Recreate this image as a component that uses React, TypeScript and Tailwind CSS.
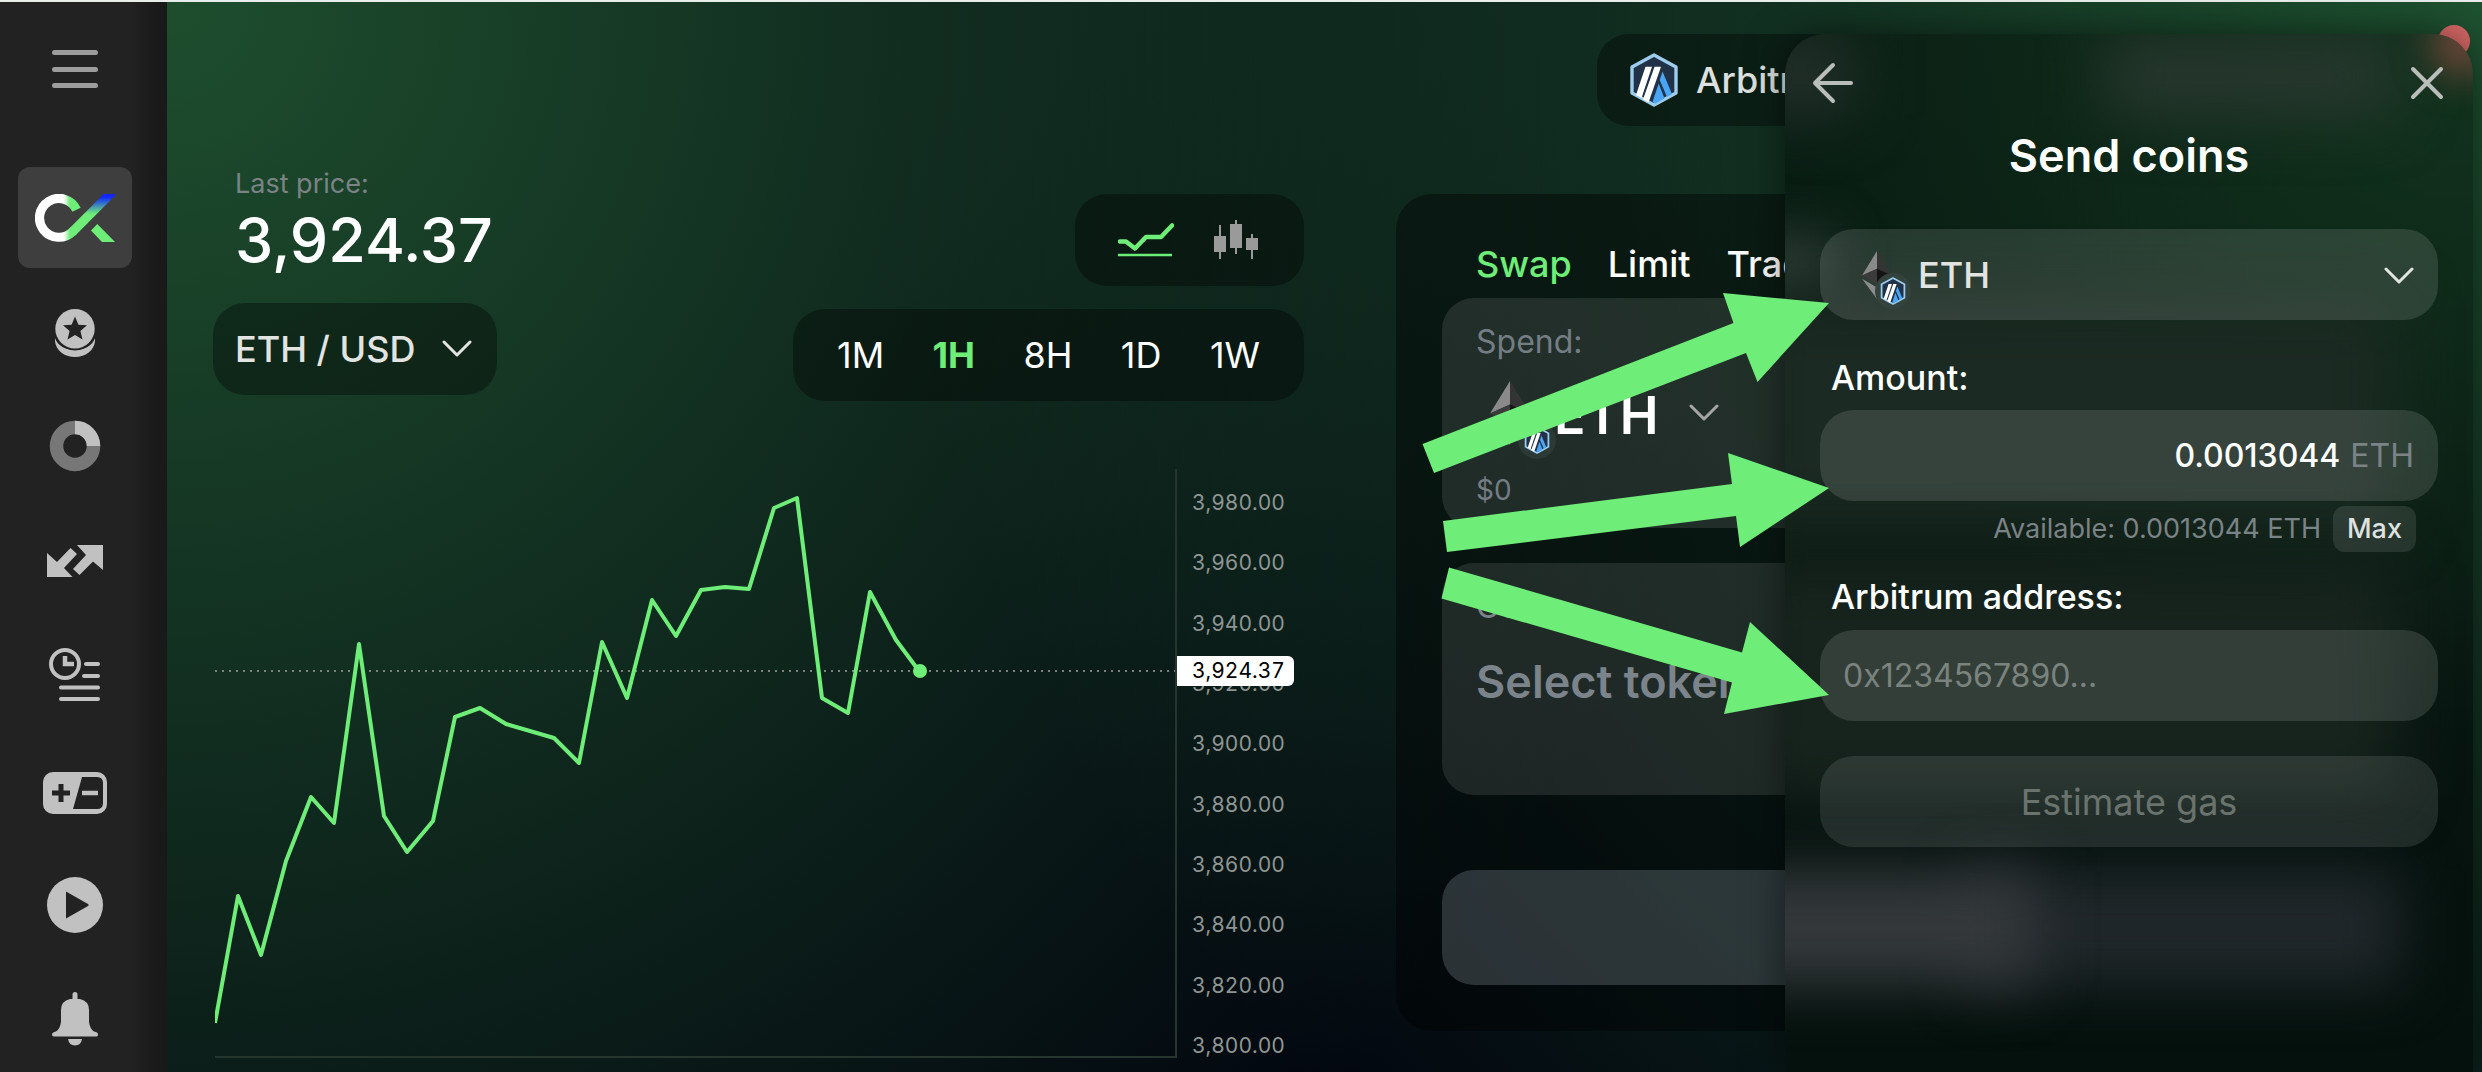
import React from "react";

const axisPrices = [
  "3,980.00",
  "3,960.00",
  "3,940.00",
  "3,920.00",
  "3,900.00",
  "3,880.00",
  "3,860.00",
  "3,840.00",
  "3,820.00",
  "3,800.00",
];

const intervals = ["1M", "1H", "8H", "1D", "1W"];

const linePoints =
  "0,554 23,427 46,486 71,392 96,328 119,354 144,175 169,347 192,383 218,352 240,248 265,239 291,255 339,269 364,294 387,173 412,229 437,131 461,167 486,121 510,118 534,120 559,39 582,29 607,229 633,244 655,123 681,171 704,202";

function Chevron({ className = "" }: { className?: string }) {
  return (
    <svg viewBox="0 0 30 18" className={`h-[18px] w-[30px] ${className}`} fill="none" stroke="currentColor" strokeWidth="3" strokeLinecap="round" strokeLinejoin="round" aria-hidden="true">
      <path d="M2 2l13 13L28 2" />
    </svg>
  );
}

function ArbitrumMark({ className }: { className: string }) {
  return (
    <svg viewBox="0 0 48 54" className={className} aria-hidden="true">
      <path d="M24 2L46 14V40L24 52L2 40V14Z" fill="#213147" stroke="#9dcced" strokeWidth="3.4" strokeLinejoin="round" />
      <path d="M15.5 13.7H22L11.5 45L6 42Z" fill="#fff" />
      <path d="M24.5 13.7H31L18.5 49.5L13 46.5Z" fill="#fff" />
      <path d="M32.5 18.5L42 41L37 44L29.7 27Z" fill="#4aa5f5" />
      <path d="M28.7 30.5L34.5 45.5L25.5 50.5L22.5 49Z" fill="#4aa5f5" />
    </svg>
  );
}

function EthDiamond({ className }: { className: string }) {
  return (
    <svg viewBox="0 0 40 64" className={className} aria-hidden="true">
      <path d="M20 0L0 32.5L20 23.5Z" fill="#8a8a8a" />
      <path d="M20 0L40 32.5L20 23.5Z" fill="#343434" />
      <path d="M20 23.5L0 32.5L20 44Z" fill="#3c3b3b" />
      <path d="M20 23.5L40 32.5L20 44Z" fill="#141414" />
      <path d="M0 37L20 48.5V64Z" fill="#8c8c8c" />
      <path d="M40 37L20 48.5V64Z" fill="#393939" />
    </svg>
  );
}

function Logo() {
  return (
    <svg viewBox="0 0 80 48" className="h-12 w-20" fill="none" aria-hidden="true">
      <defs>
        <linearGradient id="ring" gradientUnits="userSpaceOnUse" x1="29" y1="0" x2="35" y2="0">
          <stop offset="0" stopColor="#fff" />
          <stop offset="1" stopColor="#6eed78" />
        </linearGradient>
        <linearGradient id="slash" gradientUnits="userSpaceOnUse" x1="0" y1="3" x2="0" y2="20">
          <stop offset="0" stopColor="#1026fa" />
          <stop offset="1" stopColor="#6eed78" />
        </linearGradient>
      </defs>
      <path d="M41.5 15.7A19.4 19.4 0 1 0 37.5 37.7L39 36.2" stroke="url(#ring)" strokeWidth="9.2" />
      <path d="M37.3 37.9L81 -5.8" stroke="url(#slash)" strokeWidth="9.2" />
      <path d="M62.3 30L80 48H67L56 36.5Z" fill="#6eed78" />
    </svg>
  );
}

function CoinsIcon() {
  return (
    <svg viewBox="0 0 40 48" className="h-12 w-10" aria-hidden="true">
      <path d="M0 29C5 45 35 45 40 29C41 40 32 48 20 48S-1 40 0 29Z" fill="#c1c1c1" />
      <circle cx="20" cy="20" r="21.5" fill="#222" />
      <circle cx="20" cy="19.7" r="19.7" fill="#c1c1c1" />
      <path d="M20 7.5L23.4 15.7L32 16.3L25.4 22L27.5 30.5L20 25.9L12.5 30.5L14.6 22L8 16.3L16.6 15.7Z" fill="#222" />
    </svg>
  );
}

function DonutIcon() {
  return (
    <svg viewBox="0 0 52 52" className="h-[52px] w-[52px]" fill="none" strokeWidth="13.5" aria-hidden="true">
      <circle cx="26" cy="26" r="18.5" stroke="#777" />
      <path d="M26 7.5A18.5 18.5 0 0 1 44.5 26" stroke="#c1c1c1" />
    </svg>
  );
}

function TransferIcon() {
  return (
    <svg viewBox="0 0 56 32" className="h-8 w-14" fill="#c1c1c1" aria-hidden="true">
      <path d="M0 8L10 17L23.5 3L30 9L17 23L25.5 32H0Z" />
      <path d="M30 0H56V25L46 16.5L32.5 30L26 24L39 10Z" />
    </svg>
  );
}

function HistoryIcon() {
  return (
    <svg viewBox="0 0 52 54" className="h-[54px] w-[52px]" fill="none" stroke="#c1c1c1" strokeWidth="4" strokeLinecap="round" aria-hidden="true">
      <circle cx="16" cy="16" r="14" />
      <path d="M16 8V16H25" strokeLinecap="butt" strokeWidth="4.5" />
      <path d="M37 16H49M35 28H49M12 39.5H49M12 51H49" />
    </svg>
  );
}

function MarginIcon() {
  return (
    <svg viewBox="0 0 64 42" className="h-[42px] w-16" aria-hidden="true">
      <rect width="64" height="42" rx="10" fill="#c1c1c1" />
      <path d="M39 5H54Q60 5 60 11V31Q60 37 54 37H30Z" fill="#222" />
      <path d="M18 12V30M9 21H27" stroke="#222" strokeWidth="5" />
      <path d="M39 21H55" stroke="#c1c1c1" strokeWidth="4.5" />
    </svg>
  );
}

function PlayIcon() {
  return (
    <svg viewBox="0 0 56 56" className="h-14 w-14" aria-hidden="true">
      <circle cx="28" cy="28" r="28" fill="#c1c1c1" />
      <path d="M19 14.5L41 27Q42.5 28 41 29L19 41.5Z" fill="#222" />
    </svg>
  );
}

function BellIcon() {
  return (
    <svg viewBox="0 0 46 54" className="h-[54px] w-[46px]" fill="#c1c1c1" aria-hidden="true">
      <path d="M20.5 2.5Q20.5 0 23 0T25.5 2.5V7H28Q37 9 37 18V30Q38 37 42 39.5Q46 40 46 42.5T44 44.5H2Q0 44.5 0 42.5T4 39.5Q8 37 9 30V18Q9 9 18 7H20.5Z" />
      <path d="M16 47H30Q29 53.5 23 53.5T16 47Z" />
    </svg>
  );
}

function Sidebar() {
  const items = [
    { label: "Coins", icon: <CoinsIcon />, cls: "mt-[41px] h-12" },
    { label: "Portfolio", icon: <DonutIcon />, cls: "mt-[63px] h-[52px]" },
    { label: "Transfers", icon: <TransferIcon />, cls: "mt-[73px] h-8" },
    { label: "History", icon: <HistoryIcon />, cls: "mt-[71px] h-[54px]" },
    { label: "Margin", icon: <MarginIcon />, cls: "mt-[70px] h-[42px]" },
    { label: "Play", icon: <PlayIcon />, cls: "mt-[63px] h-14" },
    { label: "Notifications", icon: <BellIcon />, cls: "mt-[59px] h-[54px]" },
  ];
  return (
    <nav className="flex w-[167px] shrink-0 flex-col items-center bg-[linear-gradient(90deg,#222_0,#222_78%,#1b1b1b_90%,#191919_100%)] pr-[17px]">
      <button aria-label="Menu" className="mt-12 flex h-[38px] w-[46px] flex-col justify-between">
        <span className="h-[5px] w-full rounded-sm bg-[#9c9c9c]" />
        <span className="h-[5px] w-full rounded-sm bg-[#9c9c9c]" />
        <span className="h-[5px] w-full rounded-sm bg-[#9c9c9c]" />
      </button>
      <a href="#trade" aria-label="Trade" className="mt-[79px] flex h-[101px] w-[114px] items-center justify-center rounded-xl bg-[#3e3e3e]">
        <Logo />
      </a>
      {items.map((it) => (
        <a key={it.label} href="#" aria-label={it.label} className={`flex items-center ${it.cls}`}>
          {it.icon}
        </a>
      ))}
    </nav>
  );
}

function PriceChart() {
  return (
    <div className="mt-[68px] flex min-h-[400px] flex-1 pl-[2px]">
      <div className="mb-[14px] min-w-0 flex-1 border-r-2 border-b-2 border-[#26362f]">
        <svg viewBox="0 0 960 587" preserveAspectRatio="none" className="block h-full w-full overflow-hidden" fill="none" role="img" aria-label="ETH / USD price chart">
          <path d="M0 202H960" stroke="#79827d" strokeWidth="2" strokeDasharray="2 5" />
          <polyline points={linePoints} stroke="#6eed78" strokeWidth="4" strokeLinejoin="round" />
          <circle cx="705" cy="202" r="7" fill="#6eed78" />
        </svg>
      </div>
      <div className="relative mb-3 flex w-[127px] flex-col justify-between pt-5 text-[21px] leading-7 tabular-nums text-[#8f9592]">
        {axisPrices.map((p) => (
          <span key={p} className="pl-[15px]">{p}</span>
        ))}
        <span className="absolute top-[187px] left-0 h-[30px] w-[117px] rounded-r-md bg-white pl-[15px] leading-[30px] text-black">3,924.37</span>
      </div>
    </div>
  );
}

function ChartColumn() {
  return (
    <section className="mr-[92px] flex min-w-0 flex-1 flex-col pt-[166px] pl-[46px]">
      <div className="flex items-start justify-between">
        <div>
          <p className="pl-[22px] text-[27px] leading-8 text-[#7b8385]">Last price:</p>
          <p className="mt-1 pl-[22px] text-[61px] leading-[72px] font-medium text-white">3,924.37</p>
          <div className="relative mt-[27px] w-[284px] text-[#e2e4e2]">
            <select aria-label="Trading pair" className="h-[92px] w-full appearance-none rounded-[32px] bg-black/35 pl-[22px] text-[36px] font-medium outline-none">
              <option>ETH / USD</option>
            </select>
            <Chevron className="pointer-events-none absolute top-[37px] right-[25px]" />
          </div>
        </div>
        <div className="mt-[26px] flex flex-col items-end gap-[23px]">
          <div className="flex h-[92px] w-[229px] items-center justify-between rounded-[32px] bg-black/35 pr-[46px] pl-[43px]">
            <button aria-label="Line chart">
              <svg viewBox="0 0 56 34" className="h-[34px] w-14" fill="none" stroke="#6eed78" aria-hidden="true">
                <path d="M2 18.5H8L17 25.5L28 14H43L54 2.5" strokeWidth="4.5" strokeLinecap="round" strokeLinejoin="round" />
                <path d="M0 32H54" strokeWidth="2.5" />
              </svg>
            </button>
            <button aria-label="Candle chart">
              <svg viewBox="0 0 44 40" className="h-10 w-11" fill="#9a9a9a" aria-hidden="true">
                <path d="M0 16H12V32H0ZM5 5H7V39H5ZM16 4H28V28H16ZM21 0H23V34H21ZM32 18H44V30H32ZM37 14H39V39H37Z" />
              </svg>
            </button>
          </div>
          <div className="flex h-[92px] w-[511px] items-center justify-between rounded-[32px] bg-black/35 px-[44px] text-[36px]">
            {intervals.map((i) => (
              <button key={i} className={i === "1H" ? "font-bold text-[#6eed78]" : "text-white"}>{i}</button>
            ))}
          </div>
        </div>
      </div>
      <PriceChart />
    </section>
  );
}

function TradeColumn() {
  return (
    <section className="relative w-[1086px] shrink-0 pt-8 pr-[45px]">
      <div className="flex pl-[201px]">
        <button className="flex h-[92px] w-[360px] items-center rounded-[32px] bg-black/35 pl-[33px] text-[36px] font-medium text-[#dde0de]">
          <ArbitrumMark className="mr-[18px] h-[54px] w-12" />
          Arbitrum
        </button>
      </div>
      <span className="absolute top-[23px] right-3 h-8 w-8 rounded-full bg-[#d96a68]" />
      <div className="mt-[68px] rounded-[36px] bg-black/40 px-[46px] pt-12 pb-[46px]">
        <div className="mb-3 flex gap-9 pl-[34px] text-[36px] leading-[44px] font-medium text-white">
          <button className="text-[#6eed78]">Swap</button>
          <button>Limit</button>
          <button>Trade</button>
        </div>
        <div className="rounded-[32px] bg-white/10 pt-6 pb-[22px] pl-[34px] text-[#757d84]">
          <p className="text-[32px] leading-10">Spend:</p>
          <div className="mt-[15px] flex h-[72px] items-center pl-[2px] text-white">
            <span className="relative flex h-16 w-16 justify-center">
              <EthDiamond className="h-16 w-10" />
              <span className="absolute -right-[14px] -bottom-[14px] flex h-[38px] w-[38px] items-center justify-center rounded-full bg-[#2c3a36]">
                <ArbitrumMark className="h-7 w-7" />
              </span>
            </span>
            <label className="relative ml-3 flex items-center">
              <span className="sr-only">Spend token</span>
              <select className="h-[72px] w-[174px] appearance-none bg-transparent text-[52px] font-semibold outline-none">
                <option>ETH</option>
              </select>
              <Chevron className="pointer-events-none absolute right-[9px] text-[#a6a6a6]" />
            </label>
          </div>
          <p className="mt-[25px] text-[28px] leading-8">$0</p>
        </div>
        <div className="mt-[35px] rounded-[32px] bg-white/10 pt-6 pb-[85px] pl-[34px] text-[#7b838b]">
          <p className="text-[32px] leading-10">Get:</p>
          <button className="mt-[27px] block text-[45px] leading-[56px] font-semibold">Select token</button>
        </div>
        <div className="mt-[75px] h-[115px] rounded-[32px] bg-[#c8d8e6]/20" />
      </div>
    </section>
  );
}

function PanelGlass() {
  return (
    <div className="pointer-events-none absolute inset-0 -z-10 overflow-hidden rounded-t-[40px] bg-[radial-gradient(circle_700px_at_100%_0,rgba(26,72,40,0.5),transparent),linear-gradient(180deg,#0a1e14_0,#091d13_20%,#0a1912_50%,#06130f_75%,#05110d_100%)]" aria-hidden="true">
      <div className="absolute top-0 -left-10 h-20 w-[110px] bg-[#233029] blur-[30px]" />
      <div className="absolute top-[5px] left-[320px] h-[75px] w-[290px] bg-[#29382f] blur-[30px]" />
      <div className="absolute top-[200px] -left-10 h-[60px] w-[90px] bg-[#2d3b34] blur-[24px]" />
      <div className="absolute top-[264px] -left-10 h-[230px] w-[650px] bg-[#1b2a22] blur-[30px]" />
      <div className="absolute top-[529px] -left-10 h-[232px] w-[650px] bg-[#17241e] blur-[30px]" />
      <div className="absolute top-[836px] left-[180px] h-[115px] w-[435px] bg-[#20272a] blur-[28px]" />
      <div className="absolute top-[836px] -left-20 h-[115px] w-[330px] bg-[#34383b] blur-[28px]" />
      <div className="absolute -top-5 -right-5 h-[60px] w-[60px] rounded-full bg-[#7d4a3e] blur-[20px]" />
    </div>
  );
}

function SendPanel() {
  return (
    <aside className="absolute top-8 right-[9px] bottom-0 isolate flex w-[688px] flex-col rounded-t-[40px] px-[35px] pt-[26px] shadow-[0_0_40px_rgba(0,0,0,0.5)]">
      <PanelGlass />
      <div className="-mx-2 flex h-[46px] items-center justify-between text-[#b9bebb]">
        <button aria-label="Back">
          <svg viewBox="0 0 42 42" className="h-[42px] w-[42px]" fill="none" stroke="currentColor" strokeWidth="4" strokeLinecap="round" strokeLinejoin="round" aria-hidden="true">
            <path d="M21 3L3 21L21 39M3 21H39" />
          </svg>
        </button>
        <button aria-label="Close">
          <svg viewBox="0 0 34 34" className="mr-0.5 h-[34px] w-[34px]" fill="none" stroke="currentColor" strokeWidth="4" strokeLinecap="round" aria-hidden="true">
            <path d="M3 3L31 31M31 3L3 31" />
          </svg>
        </button>
      </div>
      <h1 className="mt-[22px] text-center text-[45px] leading-[56px] font-semibold text-white">Send coins</h1>
      <div className="relative mt-[45px] text-[#e2e4e2]">
        <select aria-label="Coin" className="h-[91px] w-full appearance-none rounded-[34px] bg-white/12 pl-[98px] text-[36px] font-medium outline-none">
          <option>ETH</option>
        </select>
        <span className="pointer-events-none absolute top-[22px] left-[33px] flex h-12 w-12 justify-center">
          <EthDiamond className="h-12 w-[30px]" />
          <span className="absolute -right-[10px] -bottom-[10px] flex h-9 w-9 items-center justify-center rounded-full bg-[#34433d]">
            <ArbitrumMark className="h-7 w-[26px]" />
          </span>
        </span>
        <Chevron className="pointer-events-none absolute top-[38px] right-6" />
      </div>
      <label htmlFor="amount" className="mt-[38px] pl-[11px] text-[34px] leading-10 font-medium text-white">Amount:</label>
      <div className="mt-3 flex h-[91px] items-center rounded-[34px] bg-white/12 pr-6 pl-6 text-[32px]">
        <input id="amount" defaultValue="0.0013044" className="min-w-0 flex-1 bg-transparent text-right font-medium text-white outline-none" />
        <span className="ml-[10px] text-[#7a8385]">ETH</span>
      </div>
      <div className="mt-[5px] flex items-center justify-end pr-[22px] text-[27px] text-[#7a8385]">
        <span>Available: 0.0013044 ETH</span>
        <button className="ml-3 h-[46px] w-[83px] rounded-xl bg-white/10 font-medium text-[#dfe2e0]">Max</button>
      </div>
      <label htmlFor="address" className="mt-[25px] pl-[11px] text-[34px] leading-10 font-medium text-white">Arbitrum address:</label>
      <input id="address" placeholder="0x1234567890..." className="mt-[13px] h-[91px] rounded-[34px] bg-white/12 px-[23px] text-[32px] outline-none placeholder:text-[#7a837d]" />
      <button className="mt-[35px] h-[91px] rounded-[34px] bg-white/10 text-[36px] text-[#6a736d]">Estimate gas</button>
    </aside>
  );
}

function PointerArrows() {
  return (
    <svg viewBox="0 0 420 440" className="pointer-events-none absolute top-[278px] right-[642px] h-[440px] w-[420px]" fill="#6eed78" aria-hidden="true">
      <path d="M303 13L409 23L337.5 102L326 73L14 193L2.5 164L313.5 43Z" />
      <path d="M308 173L409 208L320 267L316 236L27 272L23 241L312 204Z" />
      <path d="M29 287.5L322 372.5L330 342L409 415L304 434L312 402.5L21.5 318.5Z" />
    </svg>
  );
}

export default function App() {
  return (
    <div className="flex min-h-screen flex-col overflow-hidden bg-[#02060f] font-['Inter',sans-serif]">
      <div className="h-[2px] shrink-0 bg-[#e9eeea]" />
      <div className="relative flex flex-1">
        <Sidebar />
        <main className="flex min-w-0 flex-1 bg-[radial-gradient(circle_1600px_at_0_0,rgba(30,78,46,1),rgba(26,78,60,0)),radial-gradient(circle_1600px_at_100%_0,rgba(30,82,48,1),rgba(26,78,60,0))]">
          <ChartColumn />
          <TradeColumn />
        </main>
        <SendPanel />
        <PointerArrows />
      </div>
    </div>
  );
}
